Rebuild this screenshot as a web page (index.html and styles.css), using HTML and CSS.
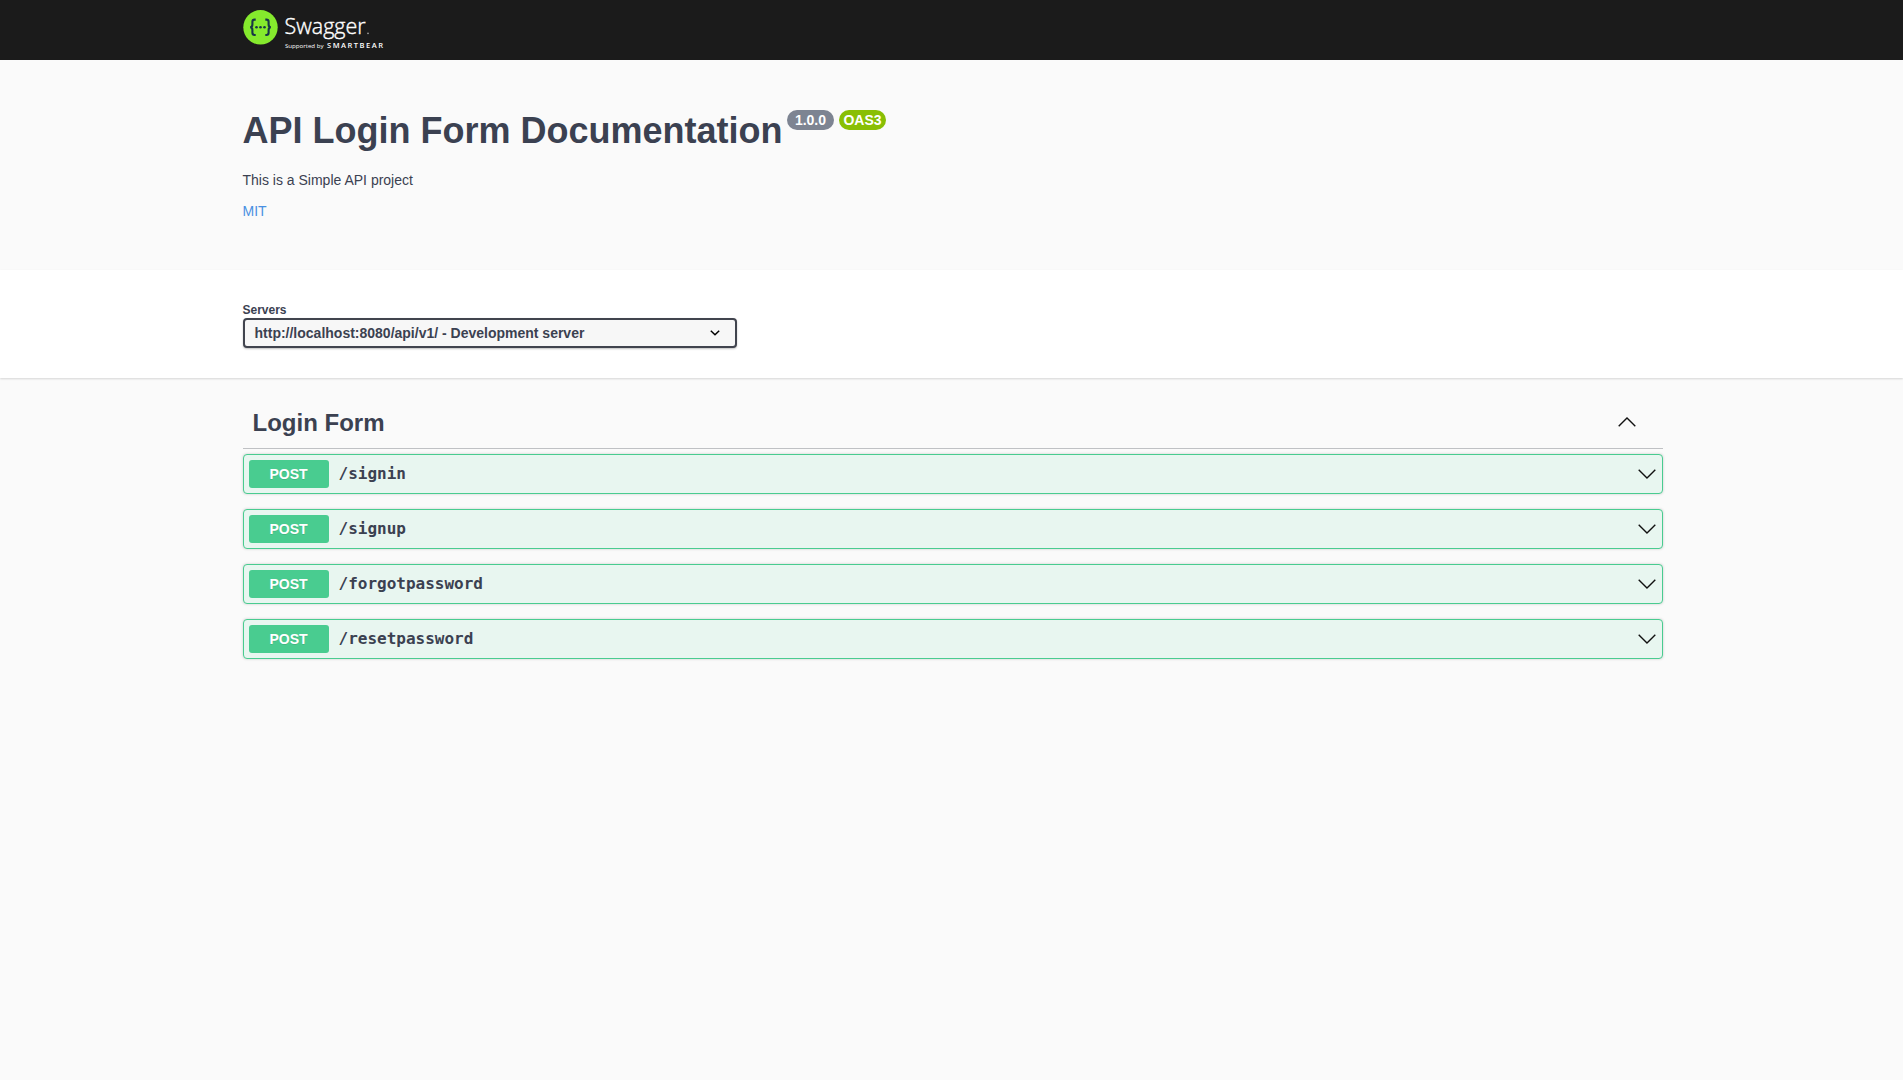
FILE: index.html
```html
<!DOCTYPE html>
<html lang="en">
<head>
<meta charset="utf-8">
<title>Swagger UI</title>
<link rel="stylesheet" href="styles.css">
</head>
<body>
<header class="topbar">
  <div class="wrapper">
    <svg class="logo" width="150" height="60" viewBox="0 0 150 60" role="img" aria-label="Swagger">
      <circle cx="17.5" cy="27.3" r="17.2" fill="#85ea2d"/>
      <g fill="none" stroke="#173647" stroke-width="2.1">
        <path d="M12.7 19.6h-1.1q-2.2 0-2.2 2.2v2.8q0 2.7-2.3 2.7q2.3 0 2.3 2.7v2.8q0 2.2 2.2 2.2h1.1"/>
        <path d="M22.3 19.6h1.1q2.2 0 2.2 2.2v2.8q0 2.7 2.3 2.7q-2.3 0-2.3 2.7v2.8q0 2.2-2.2 2.2h-1.1"/>
      </g>
      <g fill="#173647"><circle cx="13.5" cy="27.3" r="1.3"/><circle cx="17.5" cy="27.3" r="1.3"/><circle cx="21.5" cy="27.3" r="1.3"/></g>
      <text class="logo-name" x="41.6" y="34.3" textLength="81" lengthAdjust="spacingAndGlyphs">Swagger</text>
      <circle cx="125" cy="33.4" r=".8" fill="#aaa"/>
      <text class="logo-by" x="42" y="48" textLength="38.5" lengthAdjust="spacingAndGlyphs">Supported by</text>
      <text class="logo-brand" x="84" y="48" textLength="56" lengthAdjust="spacing">SMARTBEAR</text>
    </svg>
  </div>
</header>
<section class="info">
  <div class="wrapper">
    <h1 class="title">API Login Form Documentation<span class="badges"><span class="badge">1.0.0</span><span class="badge badge-oas">OAS3</span></span></h1>
    <p class="description">This is a Simple API project</p>
    <a class="license">MIT</a>
  </div>
</section>
<section class="servers">
  <div class="wrapper">
    <div class="servers-title">Servers</div>
    <div class="select">
      <span>http://localhost:8080/api/v1/ - Development server</span>
      <svg width="10" height="6" viewBox="0 0 10 6"><path d="M.8.8 5 4.8 9.2.8" fill="none" stroke="#000" stroke-width="1.5"/></svg>
    </div>
  </div>
</section>
<main class="wrapper">
  <h2 class="tag"><span>Login Form</span>
    <svg class="arrow" width="18" height="10" viewBox="0 0 18 10"><path d="M.7 9.2 9 1l8.3 8.2"/></svg></h2>
  <div class="operations">
    <div class="operation"><span class="method">POST</span><span class="path">/signin</span><svg class="arrow" width="18" height="10" viewBox="0 0 18 10"><path d="M.7.8 9 9 17.3.8"/></svg></div>
    <div class="operation"><span class="method">POST</span><span class="path">/signup</span><svg class="arrow" width="18" height="10" viewBox="0 0 18 10"><path d="M.7.8 9 9 17.3.8"/></svg></div>
    <div class="operation"><span class="method">POST</span><span class="path">/forgotpassword</span><svg class="arrow" width="18" height="10" viewBox="0 0 18 10"><path d="M.7.8 9 9 17.3.8"/></svg></div>
    <div class="operation"><span class="method">POST</span><span class="path">/resetpassword</span><svg class="arrow" width="18" height="10" viewBox="0 0 18 10"><path d="M.7.8 9 9 17.3.8"/></svg></div>
  </div>
</main>
</body>
</html>
```
FILE: styles.css
```css
* { box-sizing: border-box; }
body {
  margin: 0;
  min-height: 100vh;
  background: #fafafa;
  color: #3b4151;
  font-family: "Liberation Sans", Arial, sans-serif;
}
.wrapper { margin: 0 240.5px 0 242.5px; }
.topbar { height: 60px; background: #1b1b1b; }
.logo { display: block; }
.logo text { fill: #fff; font-family: "Open Sans", sans-serif; }
.logo .logo-name { font-size: 22.5px; font-weight: 300; stroke: #fff; stroke-width: .4px; }
.logo .logo-by { font-size: 6px; }
.logo .logo-brand { font-size: 7.5px; font-weight: 600; }

.info { height: 210px; padding-top: 50px; }
.title {
  display: flex;
  align-items: flex-start;
  margin: 0;
  font-size: 36px;
  line-height: 41px;
}
.badges { display: flex; gap: 5px; margin-left: 4.5px; }
.badge {
  height: 20px;
  width: 47px;
  border-radius: 20px;
  background: #7d8492;
  color: #fff;
  font-size: 14px;
  line-height: 20px;
  text-align: center;
}
.badge-oas { background: #89bf04; }
.description { margin: 21px 0 15px; font-size: 14px; line-height: 16px; }
.license { display: block; color: #4990e2; font-size: 14px; line-height: 16px; }

.servers {
  height: 108px;
  padding-top: 33px;
  background: #fff;
  box-shadow: 0 1px 2px rgba(0, 0, 0, .15);
}
.servers-title { height: 15px; font-size: 12px; line-height: 14px; font-weight: 700; }
.select {
  display: flex;
  align-items: center;
  justify-content: space-between;
  width: 494px;
  height: 30px;
  padding: 0 15px 0 10px;
  border: 2px solid #41444e;
  border-radius: 4px;
  background: #f7f7f7;
  box-shadow: 0 1px 2px rgba(0, 0, 0, .25);
  font-size: 14px;
  font-weight: 700;
}

.tag {
  display: flex;
  align-items: center;
  justify-content: space-between;
  height: 51px;
  margin: 20px 0 5px;
  padding: 0 27px 1px 10px;
  border-bottom: 1px solid #bfc1c4;
  font-size: 24px;
  line-height: 28px;
}
.arrow { fill: none; stroke: #111; stroke-width: 1.4; }
.tag .arrow { margin-bottom: 2px; }
.operations { display: flex; flex-direction: column; gap: 15px; }
.operation {
  display: flex;
  align-items: center;
  height: 40px;
  padding: 0 6px 0 5px;
  border: 1px solid #49cc90;
  border-radius: 4px;
  background: #e8f6f0;
  box-shadow: 0 0 3px rgba(0, 0, 0, .19);
}
.operation .arrow { margin-left: auto; }
.method {
  width: 80px;
  height: 28px;
  border-radius: 3px;
  background: #49cc90;
  color: #fff;
  font-size: 14px;
  font-weight: 700;
  line-height: 28px;
  text-align: center;
  text-shadow: 0 1px 0 rgba(0, 0, 0, .1);
}
.path {
  padding: 0 0 2px 10px;
  font: 600 16px/19px "DejaVu Sans Mono", monospace;
}
```
